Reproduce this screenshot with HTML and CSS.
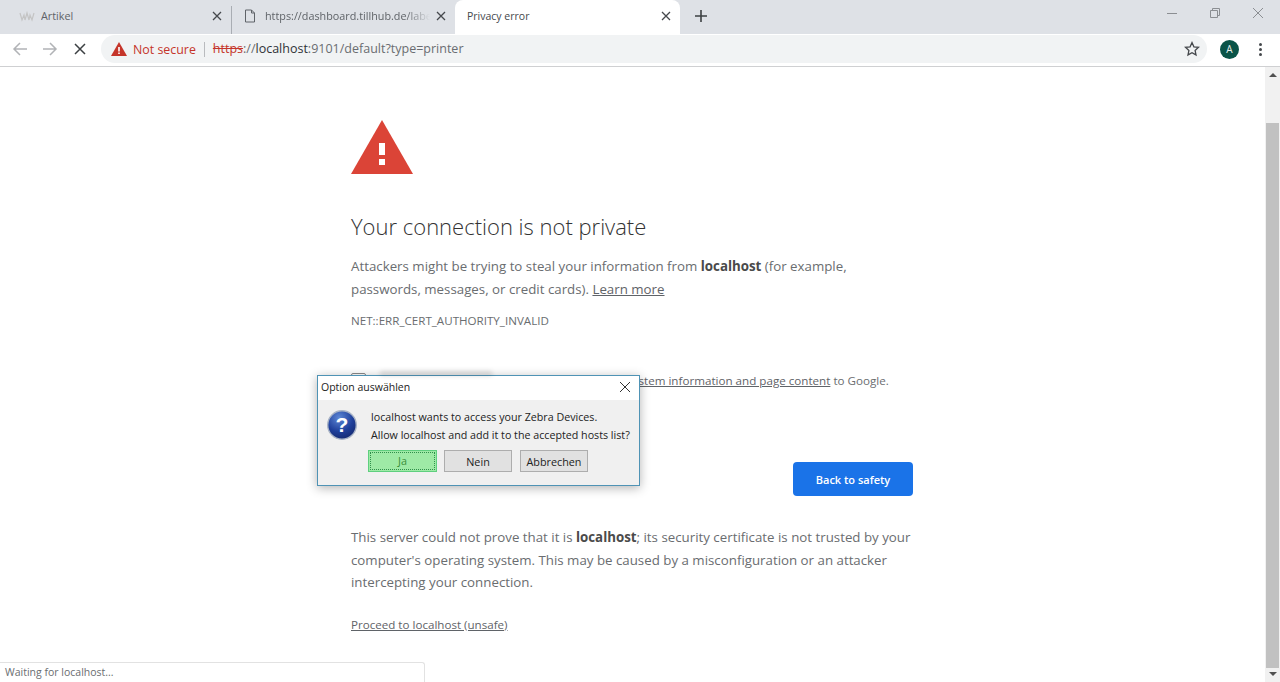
FILE: index.html
```html
<!DOCTYPE html>
<html lang="en">
<head>
  <meta charset="UTF-8">
  <title>Privacy error</title>
  <link rel="stylesheet" href="styles.css">
</head>
<body>
  <div class="tabstrip">
    <div class="tab">
      <svg class="tab-icon" viewBox="0 0 16 12" width="16" height="12"><path d="M1 3l2 7 2-5 1 5 2-7 2 7 1-5 2 5 2-7" fill="none" stroke="#c4c4c4" stroke-width="1.200"/></svg>
      <span class="tab-title">Artikel</span>
      <svg class="tab-close" viewBox="0 0 10 10" width="10" height="10"><path d="M1 1l8 8M9 1l-8 8"/></svg>
    </div>
    <div class="tab tab-second">
      <svg class="tab-icon" viewBox="0 0 12 14" width="12" height="14"><path d="M1.5 1h6l3 3v9h-9zM7.5 1v3h3" fill="none" stroke="#5f6368"/></svg>
      <span class="tab-title tab-fade">https://dashboard.tillhub.de/labels</span>
      <svg class="tab-close" viewBox="0 0 10 10" width="10" height="10"><path d="M1 1l8 8M9 1l-8 8"/></svg>
    </div>
    <div class="tab tab-active">
      <span class="tab-title">Privacy error</span>
      <svg class="tab-close" viewBox="0 0 10 10" width="10" height="10"><path d="M1 1l8 8M9 1l-8 8"/></svg>
    </div>
    <svg class="new-tab" viewBox="0 0 12 12" width="12" height="12"><path d="M6 0v12M0 6h12"/></svg>
    <div class="window-btns">
      <svg viewBox="0 0 12 12" width="12" height="12"><path d="M1 6.5h10"/></svg>
      <svg viewBox="0 0 12 12" width="12" height="12"><path d="M1.5 3.5h7v7h-7zM3.5 3.5v-2h7v7h-2"/></svg>
      <svg viewBox="0 0 12 12" width="12" height="12"><path d="M1 1l10 10M11 1l-10 10"/></svg>
    </div>
  </div>

  <div class="toolbar">
    <svg class="nav-icon nav-off" viewBox="0 0 16 16" width="16" height="16"><path d="M15 8H2M8 2L2 8l6 6"/></svg>
    <svg class="nav-icon nav-off" viewBox="0 0 16 16" width="16" height="16"><path d="M1 8h13M8 2l6 6-6 6"/></svg>
    <svg class="nav-icon" viewBox="0 0 16 16" width="16" height="16"><path d="M3 3l10 10M13 3L3 13"/></svg>
    <div class="omnibox">
      <svg class="warn-small" viewBox="0 0 16 14" width="16" height="14"><path d="M8 0l8 14H0z" fill="#c5352a"/><path d="M7.2 5h1.600v4.400H7.200zM7.200 10.400h1.600V12H7.200z" fill="#fff"/></svg>
      <span class="not-secure">Not secure</span>
      <span class="url"><s class="url-scheme">https</s><span class="url-rest">://</span><span class="url-host">localhost</span><span class="url-rest">:9101/default?type=printer</span></span>
      <svg class="star" viewBox="0 0 16 16" width="16" height="16"><path d="M8 1.600l1.900 4.200 4.600.5-3.400 3.100.9 4.500L8 11.700l-4 2.200.9-4.500L1.500 6.300l4.600-.5z"/></svg>
    </div>
    <div class="avatar">A</div>
    <div class="menu-dots"><i></i><i></i><i></i></div>
  </div>

  <div class="viewport">
    <main class="page">
      <div class="interstitial">
        <svg class="big-warn" viewBox="0 0 62 54" width="62" height="54">
          <path d="M31 0l31 54H0z" fill="#db4437"/>
          <path d="M28 23h6v12h-6zM28 39h6v6h-6z" fill="#fff"/>
        </svg>
        <h1>Your connection is not private</h1>
        <p class="lead">Attackers might be trying to steal your information from <b>localhost</b> (for example, passwords, messages, or credit cards). <a href="#">Learn more</a></p>
        <p class="error-code">NET::ERR_CERT_AUTHORITY_INVALID</p>
        <div class="report">
          <span class="checkbox"></span>
          <span>Help improve Safe Browsing by sending some <a href="#">system information and page content</a> to Google.</span>
        </div>
        <div class="actions"><button class="primary">Back to safety</button></div>
        <p class="details">This server could not prove that it is <b>localhost</b>; its security certificate is not trusted by your computer's operating system. This may be caused by a misconfiguration or an attacker intercepting your connection.</p>
        <a class="proceed" href="#">Proceed to localhost (unsafe)</a>
      </div>
    </main>
    <div class="scrollbar">
      <span class="arrow-up"></span>
      <div class="thumb"></div>
      <span class="arrow-down"></span>
    </div>

    <div class="dialog">
      <div class="dialog-title">
        <span>Option auswählen</span>
        <svg viewBox="0 0 10 10" width="10" height="10"><path d="M0 0l10 10M10 0L0 10"/></svg>
      </div>
      <div class="dialog-body">
        <div class="dialog-msg">
          <svg class="q-icon" viewBox="0 0 30 30" width="30" height="30">
            <defs><radialGradient id="qg" cx="40%" cy="25%" r="80%"><stop offset="0" stop-color="#5d87d6"/><stop offset="0.6" stop-color="#1f3f9a"/><stop offset="1" stop-color="#14286e"/></radialGradient></defs>
            <circle cx="15" cy="15" r="14.300" fill="url(#qg)" stroke="#a9b4c6" stroke-width="1.400"/>
            <text x="15" y="22" text-anchor="middle" class="q-mark">?</text>
          </svg>
          <div class="dialog-text">
            <div>localhost wants to access your Zebra Devices.</div>
            <div>Allow localhost and add it to the accepted hosts list?</div>
          </div>
        </div>
        <div class="dialog-btns">
          <button class="win-btn win-default"><span>Ja</span></button>
          <button class="win-btn">Nein</button>
          <button class="win-btn">Abbrechen</button>
        </div>
      </div>
    </div>

    <div class="status">Waiting for localhost...</div>
  </div>
</body>
</html>
```

FILE: styles.css
```css
* {
  margin: 0; padding: 0; box-sizing: border-box;
}
html, body {
  height: 100%;
}
body {
  display: flex;
  flex-direction: column;
  overflow: hidden;
  font-family: "Open Sans", "Noto Sans", sans-serif;
  color: #6a6d70;
  background: #fff;
}
svg {
  fill: none;
}

/* tab strip */
.tabstrip {
  height: 34px;
  flex: none;
  display: flex;
  align-items: stretch;
  background: #dee1e6;
}
.tab {
  width: 232px;
  display: flex;
  align-items: center;
  padding: 0 9px 9px 19px;
  font-size: 10.800px;
  color: #5f6368;
  margin-top: 6px;
  position: relative;
}
.tab:first-child {
  border-right: 1px solid #a9adb3;
  padding-bottom: 9px;
}
.tab-second {
  width: 223px;
  padding-left: 12px;
}
.tab-active {
  width: 225px;
  margin-top: 0;
  padding: 0 9px 3px 12px;
  background: #fff;
  border-radius: 8px 8px 0 0;
  color: #45484c;
  font-size: 10.500px;
}
.tab-icon {
  flex: none;
  margin-right: 6px;
}
.tab-second .tab-icon {
  margin-right: 9px;
}
.tab-title {
  flex: 1;
  white-space: nowrap;
  overflow: hidden;
}
.tab-fade {
  margin-right: 6px;
  -webkit-mask-image: linear-gradient(to right, #000 85%, transparent);
  mask-image: linear-gradient(to right, #000 85%, transparent);
}
.tab-close {
  flex: none;
  stroke: #45484c;
  stroke-width: 1.300;
}
.new-tab {
  align-self: center;
  margin: 0 0 3px 15px;
  stroke: #3c4043;
  stroke-width: 1.600;
}
.window-btns {
  margin-left: auto;
  display: flex;
  gap: 31px;
  padding: 7px 16px 0 0;
  stroke: #8b8e92;
  stroke-width: 1;
}

/* toolbar */
.toolbar {
  height: 33px;
  flex: none;
  display: flex;
  align-items: center;
  padding: 0 0 2px 12px;
  background: #fff;
  border-bottom: 1px solid #cfd0d2;
}
.nav-icon {
  flex: none;
  margin-right: 14px;
  stroke: #3c4043;
  stroke-width: 1.500;
}
.nav-off {
  stroke: #b1b3b6;
}
.omnibox {
  width: 1106px;
  height: 28px;
  margin-left: -1px;
  display: flex;
  align-items: center;
  padding: 0 7px 0 10px;
  background: #f1f3f4;
  border-radius: 14px;
  font-size: 12.400px;
}
.warn-small {
  flex: none;
  margin-bottom: 1px;
}
.not-secure {
  margin-left: 6px;
  padding-right: 8px;
  color: #c5352a;
  border-right: 1px solid #b9bbbe;
  line-height: 15px;
}
.url {
  flex: 1;
  margin-left: 8px;
  margin-bottom: 1px;
  font-size: 12.500px;
}
.url-scheme {
  color: #c5352a;
}
.url-rest {
  color: #6a6d71;
}
.url-host {
  color: #303236;
}
.star {
  flex: none;
  stroke: #45484c;
  stroke-width: 1.300;
}
.avatar {
  flex: none;
  width: 19px;
  height: 19px;
  margin-left: 13px;
  border-radius: 50%;
  background: #0a5448;
  color: #e8f0ee;
  font-size: 10px;
  line-height: 19px;
  text-align: center;
}
.menu-dots {
  margin-left: 20px;
  display: flex;
  flex-direction: column;
  gap: 2px;
}
.menu-dots i {
  width: 3px;
  height: 3px;
  border-radius: 50%;
  background: #45484c;
}

/* page */
.viewport {
  flex: 1;
  min-height: 0;
  display: flex;
  position: relative;
}
.page {
  flex: 1;
}
.interstitial {
  width: 562px;
  margin-left: 351px;
  padding-top: 53px;
  font-size: 13.300px;
  line-height: 22.500px;
}
.big-warn {
  display: block;
}
h1 {
  margin-top: 37px;
  font-size: 22px;
  font-weight: 300;
  line-height: 30px;
  color: #333;
}
.lead {
  margin-top: 14px;
}
.interstitial b {
  font-weight: 700;
  color: #4a4a4a;
}
.interstitial a {
  color: #5f6368;
  text-decoration: underline;
}
.error-code {
  margin-top: 11px;
  font-size: 11.600px;
  line-height: 20px;
}
.report {
  margin-top: 40px;
  display: flex;
  gap: 11px;
  font-size: 11.640px;
  line-height: 20px;
  white-space: nowrap;
}
.checkbox {
  flex: none;
  width: 15px;
  height: 15px;
  margin-top: 2px;
  border: 1px solid #8a8a8a;
  border-radius: 2px;
}
.actions {
  margin-top: 71px;
  display: flex;
  justify-content: flex-end;
}
.primary {
  width: 120px;
  height: 34px;
  border: 0;
  border-radius: 4px;
  background: #1a73e8;
  color: #fff;
  font: 600 11px "Open Sans", sans-serif;
}
.details {
  margin-top: 30px;
}
.proceed {
  display: inline-block;
  margin-top: 21px;
  font-size: 11.600px;
  line-height: 20px;
}

/* scrollbar */
.scrollbar {
  flex: none;
  width: 15px;
  display: flex;
  flex-direction: column;
  align-items: center;
  background: #f1f1f1;
}
.arrow-up, .arrow-down {
  flex: none;
  width: 0;
  height: 0;
  border-left: 4px solid transparent;
  border-right: 4px solid transparent;
}
.arrow-up {
  margin-top: 6px;
  border-bottom: 4px solid #505050;
}
.arrow-down {
  margin-bottom: 6px;
  border-top: 4px solid #505050;
}
.thumb {
  flex: 1;
  width: 13px;
  margin: 46px 0 4px;
  background: #c1c1c1;
}

/* native dialog over the page */
.dialog {
  position: absolute;
  left: 317px;
  top: 308px;
  width: 323px;
  height: 111px;
  display: flex;
  flex-direction: column;
  border: 1px solid #4f93b5;
  background: #f0f0f0;
  box-shadow: 0 2px 10px rgba(0, 0, 0, 0.3);
  color: #222;
}
.dialog::before {
  content: "";
  position: absolute;
  left: 62px;
  top: -5px;
  width: 112px;
  height: 5px;
  background: rgba(0, 0, 0, 0.12);
  filter: blur(2px);
}
.dialog-title {
  height: 24px;
  flex: none;
  display: flex;
  justify-content: space-between;
  align-items: center;
  padding: 0 9px 3px 3px;
  background: #fff;
  font-size: 10.500px;
}
.dialog-title svg {
  stroke: #333;
  stroke-width: 1;
}
.dialog-body {
  flex: 1;
  padding: 8px 0 0 9px;
}
.dialog-msg {
  display: flex;
  gap: 14px;
}
.q-icon {
  flex: none;
  margin-top: 2px;
}
.q-mark {
  font: 700 21px "Liberation Sans", sans-serif;
  fill: #fff;
}
.dialog-text {
  font-size: 10.700px;
  line-height: 18px;
  white-space: nowrap;
}
.dialog-btns {
  margin: 6px 0 0 41px;
  display: flex;
  gap: 7px;
}
.win-btn {
  width: 68px;
  height: 22px;
  border: 1px solid #adadad;
  background: #e1e1e1;
  color: #222;
  font: 400 10.800px "Open Sans", sans-serif;
}
.win-btn:last-child {
  margin-left: 1px;
}
.win-default {
  width: 69px;
  border: 1px solid #5fcf7f;
  background: #9eeaa6;
  color: #3a8f3a;
  padding: 1px;
}
.win-default span {
  display: block;
  height: 100%;
  line-height: 16px;
  border: 1px dotted #2f8f4a;
}

/* status bubble */
.status {
  position: absolute;
  left: 0;
  bottom: 0;
  width: 425px;
  height: 20px;
  padding-left: 5px;
  background: #fff;
  border: 1px solid #e2e2e2;
  border-width: 1px 1px 0 0;
  border-radius: 0 3px 0 0;
  font-size: 10.500px;
  line-height: 19px;
}
```
